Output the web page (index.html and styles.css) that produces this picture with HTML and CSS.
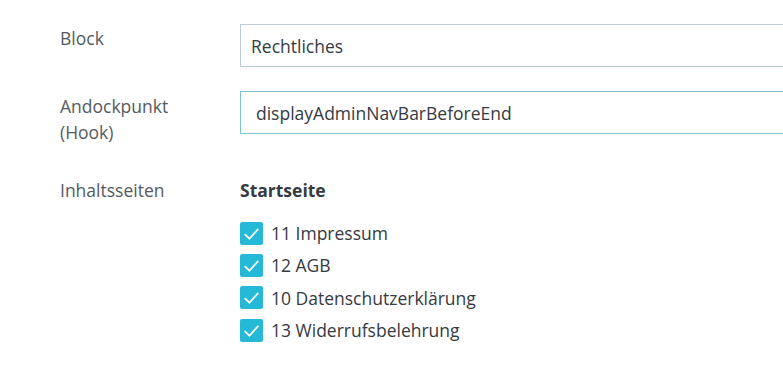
FILE: index.html
```html
<!DOCTYPE html>
<html lang="de">
<head>
    <meta charset="UTF-8">
    <title>Linkblock bearbeiten</title>
    <link rel="stylesheet" href="styles.css">
</head>
<body>
    <form class="panel">
        <div class="form-row">
            <label class="row-label" for="block">Block</label>
            <div class="row-field">
                <input class="text-input" type="text" id="block" value="Rechtliches">
            </div>
        </div>

        <div class="form-row">
            <label class="row-label" for="hook">Andockpunkt (Hook)</label>
            <div class="row-field">
                <input class="text-input hook-input" type="text" id="hook" value="displayAdminNavBarBeforeEnd">
            </div>
        </div>

        <div class="form-row pages-row">
            <div class="row-label">Inhaltsseiten</div>
            <div class="row-field">
                <div class="group-title">Startseite</div>
                <ul class="check-list">
                    <li><span class="check"><svg viewBox="0 0 22 22"><path d="M4.5 11.5l4.5 4.5 8.5-9.5"/></svg></span>11 Impressum</li>
                    <li><span class="check"><svg viewBox="0 0 22 22"><path d="M4.5 11.5l4.5 4.5 8.5-9.5"/></svg></span>12 AGB</li>
                    <li><span class="check"><svg viewBox="0 0 22 22"><path d="M4.5 11.5l4.5 4.5 8.5-9.5"/></svg></span>10 Datenschutzerklärung</li>
                    <li><span class="check"><svg viewBox="0 0 22 22"><path d="M4.5 11.5l4.5 4.5 8.5-9.5"/></svg></span>13 Widerrufsbelehrung</li>
                </ul>
            </div>
        </div>
    </form>
</body>
</html>
```

FILE: styles.css
```css
body {
    font-family: "Open Sans", "Noto Sans", sans-serif;
    background-color: #ffffff;
    color: #363a41;
    margin: 0;
    padding: 24px 0 0 0;
    overflow: hidden;
}
.panel {
    width: 900px;
}
.form-row {
    display: grid;
    grid-template-columns: 240px 1fr;
    margin-bottom: 24px;
}
.row-label {
    padding-left: 60px;
    padding-right: 20px;
    font-size: 17.5px;
    line-height: 26px;
    color: #555a60;
}
.form-row:first-child .row-label {
    margin-top: 1px;
}
.text-input {
    box-sizing: border-box;
    width: 100%;
    height: 43px;
    padding: 0 10px;
    border: 1px solid #bbcdd2;
    border-radius: 0;
    font-family: inherit;
    font-size: 17.5px;
    color: #363a41;
    background: #ffffff;
    outline: none;
}
.hook-input {
    border-color: #7cc4d6;
    padding-left: 15px;
}
.form-row:nth-child(2) .row-label {
    margin-top: 2px;
}
.pages-row .row-label {
    margin-top: 8px;
}
.group-title {
    margin-top: 8px;
    font-size: 17.5px;
    font-weight: bold;
    line-height: 26px;
}
.check-list {
    list-style: none;
    margin: 14px 0 0 0;
    padding: 0;
}
.check-list li {
    display: flex;
    align-items: center;
    gap: 8px;
    height: 32.3px;
    font-size: 17.5px;
}
.check {
    width: 23px;
    height: 23px;
    border-radius: 2px;
    background-color: #25b9d7;
    display: flex;
}
.check svg {
    width: 23px;
    height: 23px;
    fill: none;
    stroke: #ffffff;
    stroke-width: 1.7;
}
```
